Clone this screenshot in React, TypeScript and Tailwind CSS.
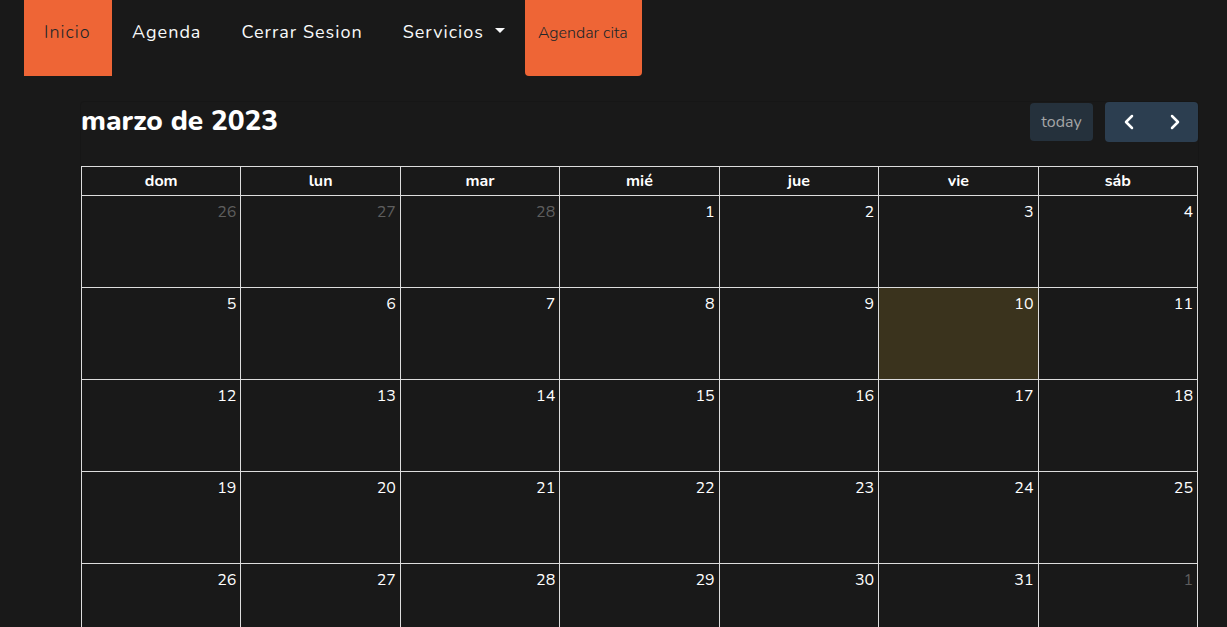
import { ChevronLeft, ChevronRight } from 'lucide-react';

const weekdays = ['dom', 'lun', 'mar', 'mié', 'jue', 'vie', 'sáb'];

const weeks = Array.from({ length: 5 }, (_, week) =>
  Array.from({ length: 7 }, (_, day) => new Date(2023, 1, 26 + week * 7 + day)),
);

const links = ['Agenda', 'Cerrar Sesion'];

function Navbar() {
  return (
    <nav className="flex h-[76px] items-stretch pl-6 text-lg/7 tracking-[1px] text-[#f8f9fa]">
      <a
        href="#inicio"
        aria-current="page"
        className="min-w-[88px] bg-[#ee6536] px-5 pt-[18px] font-light text-[#212529]"
      >
        Inicio
      </a>
      {links.map((label) => (
        <a key={label} href={'#' + label} className="px-5 pt-[18px]">
          {label}
        </a>
      ))}
      <button type="button" aria-haspopup="menu" className="flex items-start px-5 pt-[18px] tracking-[1px]">
        Servicios
        <span className="mt-[10px] ml-[11px] border-x-[5px] border-t-[5px] border-x-transparent border-t-current" />
      </button>
      <button
        type="button"
        className="flex min-w-[117px] items-start rounded-b bg-[#ee6536] px-[13px] pt-[21px] text-base font-light tracking-normal text-[#212529]"
      >
        Agendar cita
      </button>
    </nav>
  );
}

function Toolbar() {
  return (
    <div className="mb-6 flex h-10 items-center justify-between">
      <h2 className="pb-0.5 text-[28px]/8 font-extrabold">marzo de 2023</h2>
      <div className="flex items-center gap-3">
        <button type="button" disabled className="h-[38px] w-[63px] rounded bg-[#25313c] text-base text-[#a3a4a5]">
          today
        </button>
        <div className="flex overflow-hidden rounded bg-[#2c3e50]">
          <button type="button" aria-label="Anterior" className="flex h-10 w-[47px] items-center justify-center">
            <ChevronLeft className="size-6" strokeWidth={2.5} />
          </button>
          <button type="button" aria-label="Siguiente" className="flex h-10 w-[46px] items-center justify-center">
            <ChevronRight className="size-6" strokeWidth={2.5} />
          </button>
        </div>
      </div>
    </div>
  );
}

function dayColor(date: Date) {
  return date.getMonth() === 2 ? 'text-white' : 'text-[#5e5e5e]';
}

export default function App() {
  return (
    <div className="h-screen overflow-hidden bg-[#191919] font-['Nunito','Lato',sans-serif] text-base text-white">
      <Navbar />
      <main className="mt-[25px] mr-7 ml-20 rounded border border-[#161616]">
        <Toolbar />
        <table className="w-full table-fixed border-collapse">
          <thead>
            <tr className="h-[29px]">
              {weekdays.map((name) => (
                <th key={name} scope="col" className="border border-[#ddd] p-0 text-center font-bold">
                  {name}
                </th>
              ))}
            </tr>
          </thead>
          <tbody>
            {weeks.map((week) => (
              <tr key={week[0].getTime()} className="h-[92px]">
                {week.map((date) => {
                  const today = date.getMonth() === 2 && date.getDate() === 10;
                  return (
                    <td
                      key={date.getTime()}
                      className={'border border-[#ddd] p-1 text-right align-top ' + (today ? 'bg-[#3a331d]' : '')}
                    >
                      <a href="#dia" className={dayColor(date)}>
                        {date.getDate()}
                      </a>
                    </td>
                  );
                })}
              </tr>
            ))}
          </tbody>
        </table>
      </main>
    </div>
  );
}
